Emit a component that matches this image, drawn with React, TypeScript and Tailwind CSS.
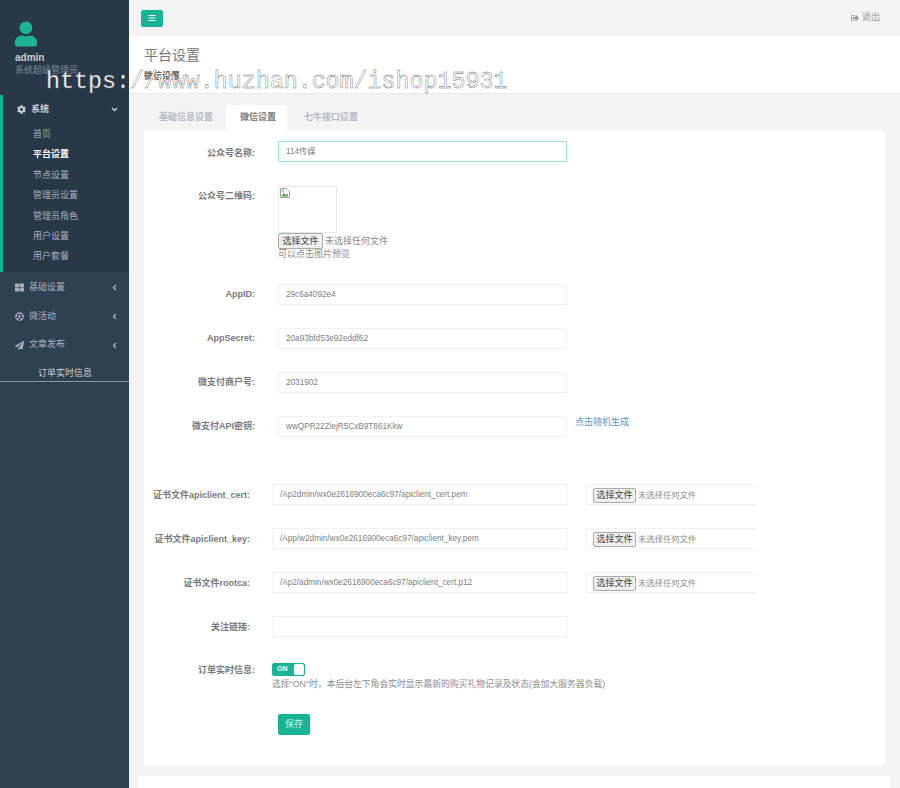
import type { ReactNode } from 'react'
import { FaBars, FaCog, FaThLarge, FaFutbol, FaPaperPlane, FaSignOutAlt, FaUser, FaAngleDown, FaAngleLeft } from 'react-icons/fa'

const subMenu = ['首页', '平台设置', '节点设置', '管理员设置', '管理员角色', '用户设置', '用户套餐']

function Label({ children, low }: { children: ReactNode; low?: boolean }) {
  return (
    <div className={`w-[111px] mr-[23px] ${low ? 'leading-[24px]' : 'leading-[21px]'} shrink-0 text-right text-[9px] font-bold text-[#777a7c]`}>
      {children}
    </div>
  )
}

function WideLabel({ children }: { children: ReactNode }) {
  return <div className="mr-[22px] w-[106px] shrink-0 text-right text-[9px] leading-[23px] font-bold text-[#777a7c]">{children}</div>
}

function Field({ value, wide }: { value?: string; wide?: boolean }) {
  return (
    <input
      readOnly
      defaultValue={value}
      className={`${wide ? 'w-[296px]' : 'w-[289px]'} h-[21px] shrink-0 border border-[#f0f1f2] bg-white pl-[7px] pb-[1px] text-[8.2px] text-[#808080] outline-none`}
    />
  )
}

function FileBox() {
  return (
    <div className="ml-[18px] flex h-[21px] w-[171px] items-center border border-r-0 border-[#f0f1f2] pl-[6px] pt-[2px]">
      <button className="h-[15px] w-[43px] rounded-[2px] border border-[#ababab] bg-[#efefef] text-[9px] leading-none text-[#444]">选择文件</button>
      <span className="ml-[2px] text-[8.3px] text-[#8a8a8a]">未选择任何文件</span>
    </div>
  )
}

export default function App() {
  return (
    <div className="relative flex h-screen overflow-hidden bg-[#f3f3f4] font-['Liberation_Sans','Noto_Sans_CJK_SC',sans-serif]">
      <aside className="w-[129px] shrink-0 bg-[#2f4050] text-[9px] text-[#a7b1c2]">
        <div className="h-[95px] bg-[#293846] pl-[15px] pt-[21px]">
          <FaUser className="h-[26px] w-[22px] text-[#1ab394]" />
          <div className="mt-[5px] text-[10px] leading-[12px] font-bold text-[#c5ced8]">admin</div>
          <div className="text-[9px] leading-[12px] whitespace-nowrap text-[#7d8997]">系统超级管理员</div>
        </div>
        <div className="h-[177px] border-l-[3px] border-[#1ab394] bg-[#293846]">
          <div className="flex h-[29px] items-center pl-[14px] pr-[10px] font-bold text-[#c8d0da]">
            <FaCog className="mr-[5px] h-[9px] w-[9px]" />
            <span>系统</span>
            <FaAngleDown className="ml-auto h-[9px] w-[9px]" />
          </div>
          <ul className="pl-[30px]">
            {subMenu.map((item) => (
              <li key={item} className={`h-[20.4px] leading-[20.4px] ${item === '平台设置' ? 'font-bold text-white' : ''}`}>
                {item}
              </li>
            ))}
          </ul>
        </div>
        <div className="mt-[1px]">
          <div className="flex h-[29px] items-center pl-[15px] pr-[10px]">
            <FaThLarge className="mr-[5px] h-[9px] w-[9px]" />
            <span>基础设置</span>
            <FaAngleLeft className="ml-auto h-[9px] w-[9px]" />
          </div>
          <div className="flex h-[29px] items-center pl-[15px] pr-[10px]">
            <FaFutbol className="mr-[5px] h-[9px] w-[9px]" />
            <span>微活动</span>
            <FaAngleLeft className="ml-auto h-[9px] w-[9px]" />
          </div>
          <div className="flex h-[28px] items-center pl-[15px] pr-[10px]">
            <FaPaperPlane className="mr-[5px] h-[9px] w-[9px]" />
            <span>文章发布</span>
            <FaAngleLeft className="ml-auto h-[9px] w-[9px]" />
          </div>
          <div className="h-[23px] border-b border-[#8a96a3] pl-[38px] leading-[29px] text-[#c8d0da]">订单实时信息</div>
        </div>
      </aside>

      <main className="min-w-0 flex-1">
        <header className="flex h-[36px] items-center justify-between pl-[12px] pr-[20px]">
          <button className="flex h-[17px] w-[22px] items-center justify-center rounded-[2px] bg-[#1ab394] text-white">
            <FaBars className="h-[8px] w-[8px]" />
          </button>
          <div className="flex items-center gap-[3px] text-[9px] text-[#999]">
            <FaSignOutAlt className="h-[8px] w-[8px]" />
            <span>退出</span>
          </div>
        </header>

        <div className="h-[58px] border-b border-[#e7eaec] bg-white pl-[15px] pt-[11px]">
          <h2 className="text-[14px] leading-[17px] text-[#777a7c]">平台设置</h2>
          <div className="mt-[6px] text-[9px] leading-[12px] font-bold text-[#555]">微信设置</div>
        </div>

        <div className="ml-[15px] mt-[11px] flex h-[26px] text-[9px] font-bold text-[#b4bac4]">
          <div className="w-[82px] pl-[15px] leading-[24px]">基础信息设置</div>
          <div className="w-[61px] rounded-t-[3px] bg-white pl-[14px] leading-[24px] text-[#777a7c]">微信设置</div>
          <div className="pl-[17px] leading-[24px]">七牛接口设置</div>
        </div>

        <section className="ml-[15px] h-[634px] w-[741px] bg-white pt-[10px]">
          <div className="flex h-[21px]">
            <Label low>公众号名称:</Label>
            <input
              readOnly
              defaultValue="114传媒"
              className="h-[21px] w-[289px] border border-[#1ab394]/40 pl-[7px] pb-[3px] text-[8.2px] text-[#808080] outline-none"
            />
          </div>

          <div className="mt-[24px] flex">
            <Label>公众号二维码:</Label>
            <div className="text-[9px] leading-[12px] text-[#8a8a8a]">
              <div className="h-[47px] w-[59px] border border-[#e8e8e8] p-[1px]">
                <svg width="10" height="10" viewBox="0 0 10 10">
                  <path d="M0.5 0.5h6l3 3v6h-9z" fill="#fff" stroke="#a0a0a0" strokeWidth="1" />
                  <path d="M1.5 8l2.5-3 2 2 2-1.500v3h-6.500z" fill="#5aa64a" />
                  <path d="M1.500 1.500h3v3h-3z" fill="#a9c9f0" />
                </svg>
              </div>
              <div className="flex h-[16px] items-center">
                <button className="h-[16px] w-[45px] rounded-[2px] border border-[#ababab] bg-[#efefef] text-[9px] leading-none text-[#444]">选择文件</button>
                <span className="ml-[2px]">未选择任何文件</span>
              </div>
              <div className="mt-[-1px]">可以点击图片预览</div>
            </div>
          </div>

          <div className="mt-[24px] flex">
            <Label>AppID:</Label>
            <Field value="29c6a4092e4" />
          </div>
          <div className="mt-[23px] flex">
            <Label>AppSecret:</Label>
            <Field value="20a93bfd53e92eddf62" />
          </div>
          <div className="mt-[23px] flex">
            <Label>微支付商户号:</Label>
            <Field value="2031902" />
          </div>
          <div className="mt-[23px] flex">
            <Label>微支付API密钥:</Label>
            <Field value="wwQPR22ZiejR5CxB9T861Kkw" />
            <a className="ml-[8px] text-[9px] leading-[13px] text-[#5b93c4]">点击随机生成</a>
          </div>

          <div className="mt-[47px] flex h-[21px]">
            <WideLabel>证书文件apiclient_cert:</WideLabel>
            <Field wide value="/Ap2dmin/wx0e2616900eca6c97/apiclient_cert.pem" />
            <FileBox />
          </div>
          <div className="mt-[23px] flex h-[21px]">
            <WideLabel>证书文件apiclient_key:</WideLabel>
            <Field wide value="/App/w2dmin/wx0e2616900eca6c97/apiclient_key.pem" />
            <FileBox />
          </div>
          <div className="mt-[23px] flex h-[21px]">
            <WideLabel>证书文件rootca:</WideLabel>
            <Field wide value="/Ap2/admin/wx0e2616900eca6c97/apiclient_cert.p12" />
            <FileBox />
          </div>
          <div className="mt-[23px] flex h-[21px]">
            <WideLabel>关注链接:</WideLabel>
            <Field wide />
          </div>

          <div className="mt-[21px] flex">
            <div className="mr-[17px] w-[111px] shrink-0 text-right text-[9px] leading-[24px] font-bold text-[#777a7c]">订单实时信息:</div>
            <div>
              <div className="mt-[5px] flex h-[13px] w-[33px] items-center rounded-[2px] border border-[#1ab394] bg-[#1ab394]">
                <span className="w-[21px] pl-[4px] text-[7px] font-bold text-white">ON</span>
                <span className="h-[11px] flex-1 rounded-[2px] bg-white" />
              </div>
              <p className="mt-[2px] text-[8.8px] leading-[12px] whitespace-nowrap text-[#8a8c8e]">选择"ON"时，本后台左下角会实时显示最新的购买礼物记录及状态(会加大服务器负载)</p>
            </div>
          </div>

          <button className="ml-[134px] mt-[24px] h-[21px] w-[32px] rounded-[2px] bg-[#1ab394] text-[9px] text-[#d6f3ec]">保存</button>
        </section>

        <div className="ml-[9px] mt-[11px] h-[20px] w-[752px] bg-white" />
      </main>

      <div className="pointer-events-none absolute left-[46px] top-[68px] font-['Liberation_Mono',monospace] text-[23.3px] leading-[28px] whitespace-nowrap text-white [-webkit-text-stroke:0.4px_#666]">
        https://www.huzhan.com/ishop15931
      </div>
    </div>
  )
}
